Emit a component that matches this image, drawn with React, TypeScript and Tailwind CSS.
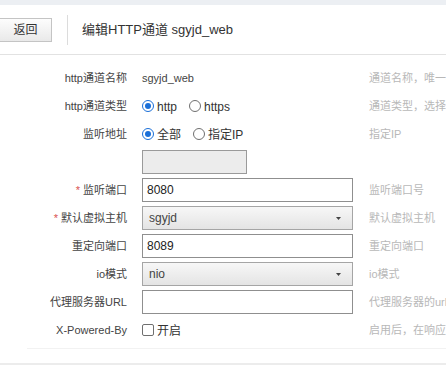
import React from 'react'

const font = { fontFamily: '"Liberation Sans", "Noto Sans CJK SC", sans-serif' }

function Radio({ checked, label }: { checked?: boolean; label: string }) {
  return (
    <span className="flex items-center mr-[12px]">
      <span
        className={`flex items-center justify-center w-[12px] h-[12px] rounded-full border bg-white ${checked ? 'border-[#1a6fd8]' : 'border-[#6f6f6f]'}`}
      >
        {checked && <span className="w-[6px] h-[6px] rounded-full bg-[#1a6fd8]" />}
      </span>
      <span className="ml-[3px] mt-[2px] text-[12px] text-[#333]">{label}</span>
    </span>
  )
}

function Row({ label, required, hint, children }: { label: string; required?: boolean; hint?: string; children?: React.ReactNode }) {
  return (
    <div className="flex h-[28px] items-center">
      <div className="w-[127px] shrink-0 text-right text-[11px] text-[#444] whitespace-nowrap">
        {required && <span className="text-[#d9534f] mr-[3px]">*</span>}
        {label}
      </div>
      <div className="w-[211px] shrink-0 ml-[15px] flex items-center">{children}</div>
      <div className="ml-[16px] text-[11px] text-[#b8b8b8] whitespace-nowrap">{hint}</div>
    </div>
  )
}

function TextInput({ value }: { value?: string }) {
  return (
    <div className="w-full h-[24px] border border-[#8f8f8f] bg-white flex items-center px-[4px] text-[12px] text-[#222]">
      {value}
    </div>
  )
}

function Select({ value }: { value: string }) {
  return (
    <div className="w-full h-[24px] border border-[#a5a5a5] bg-gradient-to-b from-[#f7f7f7] to-[#e4e4e4] flex items-center justify-between pl-[6px] pr-[11px] text-[12px] text-[#444]">
      <span>{value}</span>
      <svg width="5" height="3" viewBox="0 0 5 3">
        <path d="M0 0H5L2.5 3Z" fill="#444" />
      </svg>
    </div>
  )
}

export default function App() {
  return (
    <div className="w-[446px] h-[367px] overflow-hidden bg-white relative" style={font}>
      <div className="h-[5px] bg-[#eceff3]" />
      <div className="h-[50px] flex items-center border-b border-[#e2e2e2]">
        <button className="w-[52px] h-[24px] border border-l-0 border-[#c4c4c4] bg-gradient-to-b from-[#fdfdfd] to-[#e9e9e9] text-[12px] text-[#333]">
          返回
        </button>
        <div className="w-px h-[30px] bg-[#dcdcdc] ml-[15px]" />
        <div className="ml-[14px] text-[13px] text-[#333]">编辑HTTP通道 sgyjd_web</div>
      </div>

      <div className="pt-[9px]">
        <Row label="http通道名称" hint="通道名称，唯一标识">
          <span className="text-[11px] text-[#444]">sgyjd_web</span>
        </Row>
        <Row label="http通道类型" hint="通道类型，选择http或https">
          <Radio checked label="http" />
          <Radio label="https" />
        </Row>
        <Row label="监听地址" hint="指定IP">
          <Radio checked label="全部" />
          <Radio label="指定IP" />
        </Row>
        <Row label="">
          <div className="w-[105px] h-[24px] border border-[#9a9a9a] bg-[#ececec]" />
        </Row>
        <Row label="监听端口" required hint="监听端口号">
          <TextInput value="8080" />
        </Row>
        <Row label="默认虚拟主机" required hint="默认虚拟主机">
          <Select value="sgyjd" />
        </Row>
        <Row label="重定向端口" hint="重定向端口">
          <TextInput value="8089" />
        </Row>
        <Row label="io模式" hint="io模式">
          <Select value="nio" />
        </Row>
        <Row label="代理服务器URL" hint="代理服务器的url地址">
          <TextInput />
        </Row>
        <Row label="X-Powered-By" hint="启用后，在响应头中添加X-Powered-By">
          <span className="flex items-center">
            <span className="w-[12px] h-[12px] border border-[#6f6f6f] rounded-[2px] bg-white" />
            <span className="ml-[3px] mt-[2px] text-[12px] text-[#333]">开启</span>
          </span>
        </Row>
      </div>

      <div className="mt-[4px] ml-[27px] border-t border-[#f2f2f2]" />
      <div className="mt-[14px] border-t-2 border-[#ececec]" />
    </div>
  )
}
